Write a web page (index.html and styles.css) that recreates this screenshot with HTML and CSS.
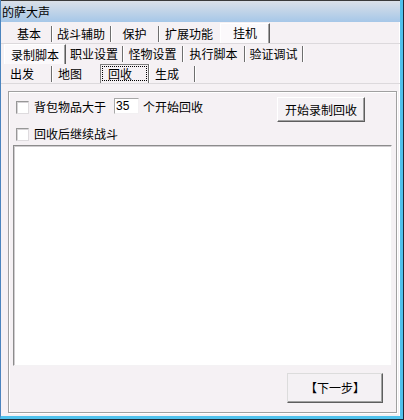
FILE: index.html
```html
<!DOCTYPE html>
<html lang="zh-CN">
<head>
<meta charset="utf-8">
<title>的萨大声</title>
<link rel="stylesheet" href="styles.css">
</head>
<body>
<div class="window">
  <div class="titlebar">的萨大声</div>

  <div class="tabrow row1">
    <span class="tab w45">基本</span>
    <span class="tab w59">战斗辅助</span>
    <span class="tab w48">保护</span>
    <span class="tab w61 nosep">扩展功能</span>
    <span class="tab w50 raised">挂机</span>
  </div>

  <div class="tabrow row2">
    <span class="tab w62 raised">录制脚本</span>
    <span class="tab w57">职业设置</span>
    <span class="tab w60">怪物设置</span>
    <span class="tab w62">执行脚本</span>
    <span class="tab w58">验证调试</span>
  </div>

  <div class="tabrow row3">
    <span class="tab w48">出发</span>
    <span class="tab w48 nosep">地图</span>
    <span class="tab w49 sunken"><span class="focus">回收</span></span>
    <span class="tab w46">生成</span>
  </div>

  <div class="panel">
    <div class="opt1">
      <span class="check"></span>
      <span class="label">背包物品大于</span>
      <span class="input">35</span>
      <span class="label after">个开始回收</span>
      <span class="btn rec">开始录制回收</span>
    </div>
    <div class="opt2">
      <span class="check"></span>
      <span class="label">回收后继续战斗</span>
    </div>
    <div class="textbox"></div>
    <div class="footer">
      <span class="btn next">【下一步】</span>
    </div>
  </div>
</div>
</body>
</html>
```

FILE: styles.css
```css
html, body {
  margin: 0;
  padding: 0;
}
body {
  background: #1d2935;
  font-family: "Noto Sans CJK SC", "Noto Sans", sans-serif;
  font-size: 12px;
  color: #000;
}
.window {
  width: 403px;
  height: 419px;
  box-sizing: border-box;
  border-left: 1px solid #4b84be;
  border-right: 3px solid #4fc1ec;
  border-bottom: 3px solid #4fc1ec;
  background: #f5f1f4;
  box-shadow: inset -1px 0 0 #ffffff;
  display: flex;
  flex-direction: column;
}
.titlebar {
  height: 22px;
  box-sizing: border-box;
  border-top: 1px solid #3a3a3a;
  background: linear-gradient(#dae0e8, #a6c7e8);
  padding-left: 1px;
  line-height: 21px;
  white-space: nowrap;
}

/* tab rows */
.tabrow {
  display: flex;
  align-items: flex-end;
  white-space: nowrap;
}
.row1 {
  height: 21px;
  padding-left: 6px;
  border-bottom: 1px solid #dcd9dc;
}
.row2 {
  height: 20px;
  padding-left: 3px;
}
.row3 {
  height: 19px;
  padding-left: 3px;
  border-bottom: 1px solid #dcd9dc;
}
.tab {
  display: block;
  box-sizing: border-box;
  height: 16px;
  line-height: 16px;
  margin-bottom: 1px;
  text-align: center;
  border-right: 1px solid #6e6e6e;
  box-shadow: 1px 0 0 #ffffff;
}
.row2 .tab {
  margin-bottom: 2px;
}
.row3 .tab {
  text-align: left;
  padding-left: 6px;
}
.tab.nosep {
  border-right-color: transparent;
  box-shadow: none;
}
.tab.raised {
  align-self: stretch;
  height: auto;
  margin-bottom: 0;
  background: #fbf9fb;
  border-top: 1px solid #ffffff;
  border-left: 1px solid #ffffff;
  border-right: 1px solid #5c5c5c;
  box-shadow: inset -1px 0 0 #a3a3a3;
  line-height: 19px;
}
.row1 .tab.raised {
  margin-top: 1px;
  line-height: 18px;
}
.tab.sunken {
  align-self: stretch;
  height: auto;
  margin-bottom: 0;
  padding: 1px 1px 2px 1px;
  border-top: 1px solid #808080;
  border-left: 1px solid #808080;
}
.row3 .tab.sunken {
  padding-left: 1px;
}
.focus {
  display: block;
  height: 100%;
  box-sizing: border-box;
  border: 1px dotted #000000;
  padding-left: 5px;
  line-height: 13px;
}
.w45 { width: 45px; }
.w46 { width: 46px; }
.w48 { width: 48px; }
.w49 { width: 49px; }
.w50 { width: 50px; }
.w57 { width: 57px; }
.w58 { width: 58px; }
.w59 { width: 59px; }
.w60 { width: 60px; }
.w61 { width: 61px; }
.w62 { width: 62px; }

/* content panel */
.panel {
  flex: 1;
  margin: 7px 3px 3px 7px;
  border: 1px solid #a0a0a0;
  box-shadow: inset 1px 1px 0 #ffffff, 1px 1px 0 #ffffff;
  display: flex;
  flex-direction: column;
}
.opt1 {
  display: flex;
  align-items: flex-start;
  height: 25px;
  margin-top: 5px;
  padding-left: 7px;
  white-space: nowrap;
}
.opt2 {
  display: flex;
  align-items: center;
  height: 14px;
  margin-top: 5px;
  padding-left: 7px;
  white-space: nowrap;
}
.check {
  display: block;
  flex: none;
  width: 13px;
  height: 13px;
  box-sizing: border-box;
  border: 1px solid;
  border-color: #979797 #dedbde #dedbde #979797;
  background: #ffffff;
  box-shadow: inset 1px 1px 0 #d6d3d6;
}
.opt1 .check {
  margin-top: 4px;
}
.label {
  display: block;
  margin-left: 5px;
  line-height: 16px;
}
.opt1 .label {
  margin-top: 2px;
}
.opt2 .label {
  line-height: 14px;
}
.label.after {
  margin-left: 4px;
}
.input {
  display: block;
  margin-left: 8px;
  margin-top: 1px;
  width: 25px;
  height: 16px;
  box-sizing: border-box;
  background: #ffffff;
  border: 1px solid;
  border-color: #a8a8a8 #f2f0f2 #f2f0f2 #a8a8a8;
  font-family: "Liberation Sans", Arial, sans-serif;
  font-size: 12px;
  line-height: 14px;
  padding-left: 1px;
}
.btn {
  display: block;
  box-sizing: border-box;
  background: #f4f1f4;
  border: 1px solid;
  border-color: #ffffff #5e5e5e #5e5e5e #ffffff;
  box-shadow: inset -1px -1px 0 #a2a2a2;
  text-align: center;
  white-space: nowrap;
}
.btn.rec {
  margin-left: auto;
  margin-right: 31px;
  width: 88px;
  height: 25px;
  line-height: 23px;
}
.textbox {
  height: 221px;
  margin: 4px 4px 0 4px;
  box-sizing: border-box;
  background: #ffffff;
  border: 1px solid;
  border-color: #8c8c8c #f4f2f4 #f4f2f4 #8c8c8c;
  box-shadow: inset 1px 1px 0 #cfcccf;
}
.footer {
  display: flex;
  justify-content: flex-end;
  margin-top: 7px;
  padding-right: 13px;
}
.btn.next {
  width: 96px;
  height: 30px;
  line-height: 28px;
  border-color: #dcdcdc #5e5e5e #5e5e5e #dcdcdc;
}
```
